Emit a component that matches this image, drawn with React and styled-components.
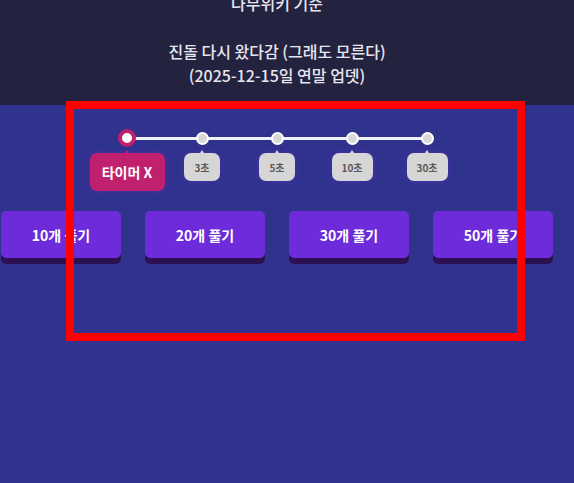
import React, {useState} from 'react';
import styled, {createGlobalStyle} from 'styled-components';

const GlobalStyle = createGlobalStyle`
  body {
    margin: 0;
    background-color: #30338e;
    font-family: 'Noto Sans CJK KR', 'Noto Sans', sans-serif;
  }
`;

const stops = [
  {label: '타이머 X', value: 0},
  {label: '3초', value: 3},
  {label: '5초', value: 5},
  {label: '10초', value: 10},
  {label: '30초', value: 30},
];

const counts = [10, 20, 30, 50];

export default function App() {
  const [timer, setTimer] = useState(0);
  return (
    <Page>
      <GlobalStyle />
      <Header>
        <Notice>
          나무위키 기준
          <br />
          <br />
          진돌 다시 왔다감 (그래도 모른다)
          <br />
          (2025-12-15일 연말 업뎃)
        </Notice>
      </Header>
      <Main>
        <TimerSlider>
          {stops.map((s, i) => (
            <Stop key={s.value} onClick={() => setTimer(i)}>
              <Knob $active={i === timer} />
              <StopLabel $active={i === timer}>{s.label}</StopLabel>
            </Stop>
          ))}
        </TimerSlider>
        <ButtonRow>
          {counts.map((n) => (
            <SolveButton key={n}>{n}개 풀기</SolveButton>
          ))}
        </ButtonRow>
      </Main>
      <Highlight />
    </Page>
  );
}

const Page = styled.div`
  position: relative;
  min-height: 483px;
  overflow: hidden;
`;

const Header = styled.header`
  margin-top: -9px;
  padding: 0 20px 18px 0;
  background-color: #24233f;
  text-align: center;
`;

const Notice = styled.p`
  margin: 0;
  color: #e6e6ef;
  font-size: 16px;
  font-weight: 500;
  line-height: 24px;
`;

const Main = styled.main`
  width: 554px;
  padding-top: 24px;
  display: flex;
  flex-direction: column;
  align-items: center;
`;

const TimerSlider = styled.div`
  position: relative;
  display: flex;
  width: 375px;
  &::before {
    content: '';
    position: absolute;
    left: 37.5px;
    right: 37.5px;
    top: 7.5px;
    height: 3px;
    background-color: #f1f1f6;
  }
`;

const Stop = styled.div`
  position: relative;
  width: 75px;
  display: flex;
  flex-direction: column;
  align-items: center;
  cursor: pointer;
`;

const Knob = styled.div`
  width: 18px;
  height: 18px;
  display: flex;
  align-items: center;
  justify-content: center;
  &::after {
    content: '';
    box-sizing: border-box;
    border-radius: 50%;
    width: ${(p) => (p.$active ? '18px' : '13px')};
    height: ${(p) => (p.$active ? '18px' : '13px')};
    background-color: ${(p) => (p.$active ? '#ffffff' : '#d8d8d8')};
    border: ${(p) => (p.$active ? '4px solid #c0206e' : '2px solid #ffffff')};
  }
`;

const StopLabel = styled.div`
  position: relative;
  margin-top: 6px;
  box-sizing: border-box;
  width: ${(p) => (p.$active ? '75px' : 'auto')};
  height: ${(p) => (p.$active ? '38px' : '28px')};
  padding: 0 10px;
  display: flex;
  align-items: center;
  justify-content: center;
  border-radius: 7px;
  background-color: ${(p) => (p.$active ? '#c0206e' : '#d6d6d6')};
  color: ${(p) => (p.$active ? '#ffffff' : '#5a5a5a')};
  font-size: ${(p) => (p.$active ? '14px' : '10px')};
  font-weight: 700;
  box-shadow: 0 0 6px rgba(92, 44, 190, 0.55);
  &::before {
    content: '';
    position: absolute;
    top: -3px;
    left: 50%;
    margin-left: -2px;
    border-left: 2px solid transparent;
    border-right: 2px solid transparent;
    border-bottom: 3px solid ${(p) => (p.$active ? '#c0206e' : '#d6d6d6')};
  }
`;

const ButtonRow = styled.div`
  display: flex;
  gap: 24px;
  margin-top: 20px;
`;

const SolveButton = styled.button`
  width: 120px;
  height: 47px;
  border: none;
  border-radius: 5px;
  background-color: #6d2bd9;
  box-shadow: 0 6px 0 #2b1052;
  color: #ffffff;
  font-family: inherit;
  font-size: 14px;
  font-weight: 700;
  cursor: pointer;
  &:hover {
    opacity: 0.9;
  }
`;

const Highlight = styled.div`
  position: absolute;
  left: 66px;
  top: 101px;
  width: 459px;
  height: 240px;
  box-sizing: border-box;
  border: 8px solid #ff0000;
  pointer-events: none;
`;
